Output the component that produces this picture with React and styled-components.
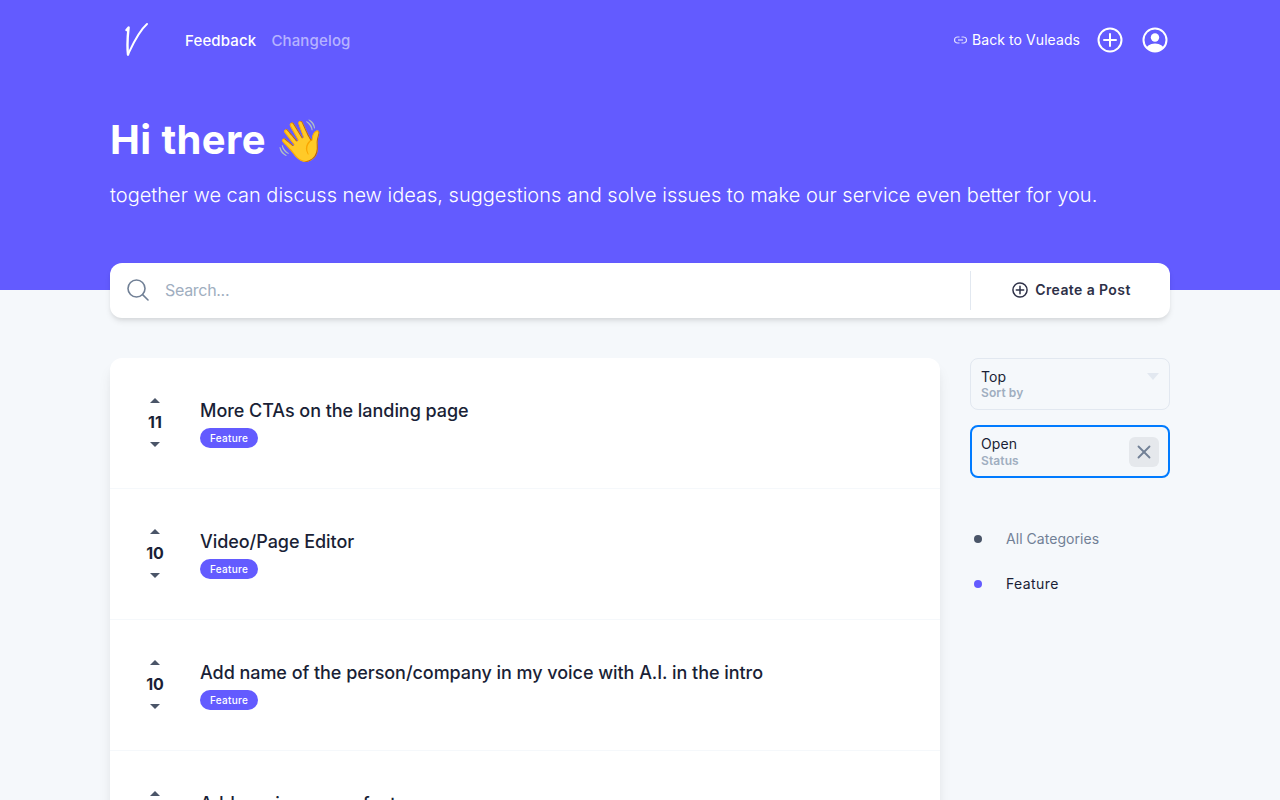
import React from "react";
import styled, {createGlobalStyle} from "styled-components";
import {X} from "lucide-react";

const GlobalStyle = createGlobalStyle`
  html, body {
    margin: 0;
    padding: 0;
    height: 800px;
    overflow: hidden;
    background-color: #f5f8fb;
    font-family: Inter, "Liberation Sans", sans-serif;
    color: #1a1f36;
  }
  * {
    box-sizing: border-box;
  }
`;

const Hero = styled.header`
  height: 290px;
  background-color: #635bff;
  padding: 0 110px;
`;

const NavBar = styled.nav`
  display: flex;
  align-items: center;
  justify-content: space-between;
  height: 80px;
`;

const NavLeft = styled.div`
  display: flex;
  align-items: center;
`;

const LogoBox = styled.div`
  display: flex;
  width: 75px;
  padding-left: 15px;
`;

const NavLink = styled.a`
  font-size: 15px;
  font-weight: 500;
  margin-right: 15px;
  letter-spacing: 0.15px;
  color: ${(props) => (props.$active ? "#ffffff" : "rgba(255, 255, 255, 0.55)")};
`;

const NavRight = styled.div`
  display: flex;
  align-items: center;
  padding-right: 2px;
`;

const BackLink = styled.a`
  display: flex;
  align-items: center;
  gap: 5px;
  font-size: 14px;
  line-height: 20px;
  letter-spacing: 0.07px;
  margin-top: -1px;
  color: #ffffff;
  margin-right: 17px;
`;

const IconButton = styled.button`
  display: flex;
  border: none;
  background: none;
  padding: 0;
  margin-left: ${(props) => props.$gap || 0}px;
`;

const HeroTitle = styled.h1`
  margin: 32px 0 0;
  font-size: 40px;
  line-height: 56px;
  font-weight: 700;
  letter-spacing: 0.4px;
  color: #ffffff;
  display: flex;
  align-items: center;
  gap: 9px;
`;

const Emoji = styled.span`
  font-size: 41px;
  line-height: 56px;
`;

const HeroText = styled.p`
  margin: 13px 0 0;
  font-size: 20px;
  line-height: 28px;
  font-weight: 300;
  color: #ffffff;
`;

const Main = styled.main`
  padding: 0 110px;
`;

const SearchBar = styled.div`
  display: flex;
  align-items: center;
  height: 55px;
  margin-top: -27px;
  padding-bottom: 1px;
  background-color: #ffffff;
  border-radius: 12px;
  box-shadow: 0 4px 6px -1px rgba(0, 0, 0, 0.1), 0 2px 4px -1px rgba(0, 0, 0, 0.06);
  position: relative;
`;

const SearchIconBox = styled.div`
  display: flex;
  padding-left: 17px;
`;

const SearchInput = styled.input`
  flex: 1;
  border: none;
  outline: none;
  background: none;
  font-family: inherit;
  font-size: 16px;
  font-weight: 400;
  letter-spacing: -0.3px;
  margin-left: 14px;
  color: #1a1f36;

  &::placeholder {
    color: #a0aec0;
    opacity: 1;
  }
`;

const CreateButton = styled.button`
  display: flex;
  align-items: center;
  justify-content: center;
  gap: 7px;
  width: 200px;
  height: 39px;
  padding: 0 0 1px 2px;
  border: none;
  border-left: 1px solid #e2e8f0;
  background: none;
  font-family: inherit;
  font-size: 14px;
  font-weight: 600;
  letter-spacing: 0.4px;
  color: #2d3047;
`;

const Columns = styled.div`
  display: flex;
  justify-content: space-between;
  align-items: flex-start;
  margin-top: 40px;
`;

const PostList = styled.section`
  width: 830px;
  background-color: #ffffff;
  border-radius: 12px;
  box-shadow: 0 10px 15px -3px rgba(0, 0, 0, 0.1), 0 4px 6px -2px rgba(0, 0, 0, 0.05);
`;

const PostRow = styled.article`
  display: flex;
  align-items: center;
  height: 131px;
  padding-bottom: 1px;
  border-bottom: 1px solid #f5f8fb;
`;

const VoteColumn = styled.div`
  display: flex;
  flex-direction: column;
  align-items: center;
  width: 90px;
`;

const VoteArrow = styled.span`
  width: 0;
  height: 0;
  border-left: 5px solid transparent;
  border-right: 5px solid transparent;
  ${(props) => (props.$down ? "border-top: 5px solid #4a5568;" : "border-bottom: 5px solid #4a5568;")}
`;

const VoteCount = styled.span`
  font-size: 16px;
  line-height: 24px;
  font-weight: 700;
  margin: 7px 0 8px;
  color: #1a1f36;
`;

const PostTitle = styled.h2`
  margin: 0;
  font-size: 18px;
  line-height: 27px;
  font-weight: 500;
  letter-spacing: -0.05px;
  color: #1a1f36;
`;

const Badge = styled.span`
  display: inline-flex;
  align-items: center;
  height: 20px;
  padding: 0 10px;
  border-radius: 10px;
  background-color: #635bff;
  color: #ffffff;
  font-size: 10px;
  font-weight: 500;
  letter-spacing: 0.3px;
`;

const BadgeRow = styled.div`
  display: flex;
  margin-top: 4px;
`;

const Sidebar = styled.aside`
  width: 200px;
`;

const FilterBox = styled.div`
  display: flex;
  align-items: center;
  justify-content: space-between;
  height: ${(props) => (props.$focused ? 53 : 52)}px;
  padding: 0 ${(props) => (props.$focused ? 9 : 10)}px;
  margin-bottom: 15px;
  border-radius: 8px;
  border: ${(props) => (props.$focused ? "2px solid #007bff" : "1px solid #e2e8f0")};
  position: relative;
`;

const FilterValue = styled.div`
  font-size: 14px;
  line-height: 17px;
  margin-bottom: ${(props) => (props.$focused ? 2 : 1)}px;
  letter-spacing: 0.1px;
  color: #1a1f36;
`;

const FilterLabel = styled.div`
  font-size: 12px;
  line-height: 14px;
  font-weight: 600;
  letter-spacing: 0.1px;
  color: #a0aec0;
`;

const Caret = styled.span`
  position: absolute;
  top: 14px;
  right: 10px;
  width: 0;
  height: 0;
  border-left: 6px solid transparent;
  border-right: 6px solid transparent;
  border-top: 7px solid #e2e8f0;
`;

const ClearButton = styled.button`
  display: flex;
  align-items: center;
  justify-content: center;
  width: 30px;
  height: 30px;
  border: none;
  border-radius: 6px;
  background-color: #e5e8ec;
  color: #718096;
  padding: 0;
`;

const Categories = styled.ul`
  list-style: none;
  margin: 38px 0 0;
  padding: 0;
`;

const CategoryItem = styled.li`
  display: flex;
  align-items: center;
  height: 45px;
  padding-left: 4px;
  font-size: 14px;
  letter-spacing: ${(props) => (props.$active ? 0.4 : 0.05)}px;
  color: ${(props) => (props.$active ? "#1a1f36" : "#718096")};
`;

const Dot = styled.span`
  width: 8px;
  height: 8px;
  border-radius: 50%;
  margin-right: 24px;
  background-color: ${(props) => props.$color};
`;

const posts = [
    {id: 1, votes: 11, title: "More CTAs on the landing page"},
    {id: 2, votes: 10, title: "Video/Page Editor"},
    {id: 3, votes: 10, title: "Add name of the person/company in my voice with A.I. in the intro"},
    {id: 4, votes: 10, title: "Add a voice over a feature"},
];

const Logo = () => (
    <svg width="24" height="36" viewBox="0 0 24 36" fill="none" stroke="#ffffff" strokeLinecap="round" strokeLinejoin="round">
        <path d="M1.5 8 L3.6 5.5 C2.6 14 2 24 3 32.5" strokeWidth="2.4"/>
        <path d="M3 32.5 C7 24 13 10 22 2" strokeWidth="2"/>
    </svg>
);

const LinkIcon = () => (
    <svg width="13" height="8" viewBox="0 0 13 8" fill="none" stroke="#ffffff" strokeWidth="1.2" strokeOpacity="0.8">
        <path d="M5.5 1 H3.5 a3 3 0 0 0 0 6 H5.5"/>
        <path d="M7.5 1 H9.5 a3 3 0 0 1 0 6 H7.5"/>
        <path d="M4 4 H9"/>
    </svg>
);

const PlusCircle = ({size, color, width}) => (
    <svg width={size} height={size} viewBox="0 0 26 26" fill="none" stroke={color} strokeWidth={width} strokeLinecap="round">
        <circle cx="13" cy="13" r="11.5"/>
        <path d="M13 7 V19 M7 13 H19"/>
    </svg>
);

const UserIcon = () => (
    <svg width="26" height="26" viewBox="0 0 26 26">
        <defs>
            <clipPath id="user-clip">
                <circle cx="13" cy="13" r="11.5"/>
            </clipPath>
        </defs>
        <circle cx="13" cy="10.5" r="4.2" fill="#ffffff"/>
        <ellipse cx="13" cy="23" rx="9.5" ry="6.5" fill="#ffffff" clipPath="url(#user-clip)"/>
        <circle cx="13" cy="13" r="11.5" fill="none" stroke="#ffffff" strokeWidth="2"/>
    </svg>
);

const SearchGlyph = () => (
    <svg width="22" height="22" viewBox="0 0 22 22" fill="none" stroke="#718096" strokeWidth="1.6" strokeLinecap="round">
        <circle cx="9.5" cy="9.5" r="8.5"/>
        <path d="M15.6 15.6 L21 21"/>
    </svg>
);

export default function App() {
    return (
        <>
            <GlobalStyle/>
            <Hero>
                <NavBar>
                    <NavLeft>
                        <LogoBox><Logo/></LogoBox>
                        <NavLink $active>Feedback</NavLink>
                        <NavLink>Changelog</NavLink>
                    </NavLeft>
                    <NavRight>
                        <BackLink><LinkIcon/>Back to Vuleads</BackLink>
                        <IconButton><PlusCircle size={26} color="#ffffff" width={2}/></IconButton>
                        <IconButton $gap={19}><UserIcon/></IconButton>
                    </NavRight>
                </NavBar>
                <HeroTitle>Hi there <Emoji>👋</Emoji></HeroTitle>
                <HeroText>together we can discuss new ideas, suggestions and solve issues to make our service even better for you.</HeroText>
            </Hero>
            <Main>
                <SearchBar>
                    <SearchIconBox><SearchGlyph/></SearchIconBox>
                    <SearchInput placeholder="Search..." readOnly/>
                    <CreateButton><PlusCircle size={16} color="#2d3047" width={2.4}/>Create a Post</CreateButton>
                </SearchBar>
                <Columns>
                    <PostList>
                        {posts.map((post) => (
                            <PostRow key={post.id}>
                                <VoteColumn>
                                    <VoteArrow/>
                                    <VoteCount>{post.votes}</VoteCount>
                                    <VoteArrow $down/>
                                </VoteColumn>
                                <div>
                                    <PostTitle>{post.title}</PostTitle>
                                    <BadgeRow><Badge>Feature</Badge></BadgeRow>
                                </div>
                            </PostRow>
                        ))}
                    </PostList>
                    <Sidebar>
                        <FilterBox>
                            <div>
                                <FilterValue>Top</FilterValue>
                                <FilterLabel>Sort by</FilterLabel>
                            </div>
                            <Caret/>
                        </FilterBox>
                        <FilterBox $focused>
                            <div>
                                <FilterValue $focused>Open</FilterValue>
                                <FilterLabel>Status</FilterLabel>
                            </div>
                            <ClearButton><X size={22} strokeWidth={2}/></ClearButton>
                        </FilterBox>
                        <Categories>
                            <CategoryItem><Dot $color="#4a5568"/>All Categories</CategoryItem>
                            <CategoryItem $active><Dot $color="#635bff"/>Feature</CategoryItem>
                        </Categories>
                    </Sidebar>
                </Columns>
            </Main>
        </>
    );
}
